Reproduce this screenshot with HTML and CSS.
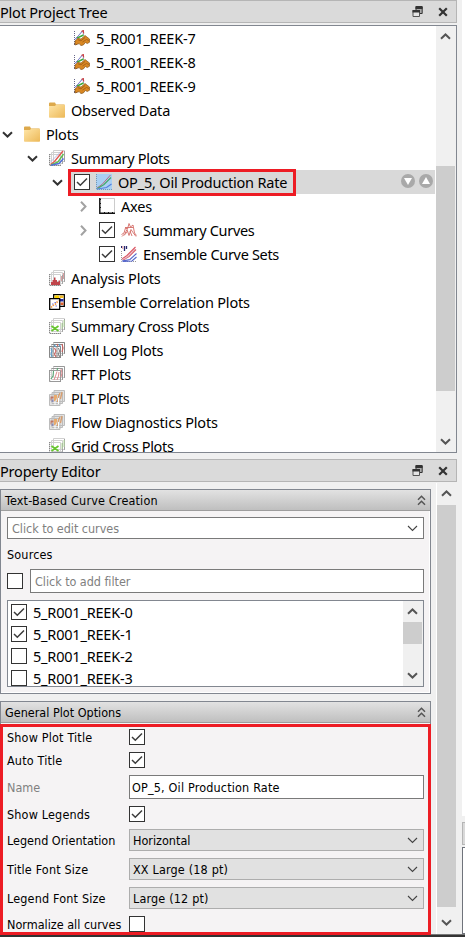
FILE: index.html
```html
<!DOCTYPE html>
<html lang="en">
<head>
<meta charset="utf-8">
<title>Plot Project Tree</title>
<link rel="stylesheet" href="styles.css">
</head>
<body>
<svg class="defs" width="0" height="0">
  <defs>
    <linearGradient id="gold" x1="0" y1="0" x2="1" y2="1"><stop offset="0" stop-color="#ffe6a8"/><stop offset="1" stop-color="#ecb857"/></linearGradient>
  </defs>
  <symbol id="down" viewBox="0 0 11 7"><path d="M1 1.2 5.5 5.5 10 1.2" fill="none" stroke="currentColor" stroke-width="2"/></symbol>
  <symbol id="up" viewBox="0 0 11 7"><path d="M1 5.8 5.5 1.5 10 5.8" fill="none" stroke="currentColor" stroke-width="2"/></symbol>
  <symbol id="right" viewBox="0 0 7 11"><path d="M1 .8 5.5 5.5 1 10.2" fill="none" stroke="#a2a2a2" stroke-width="2"/></symbol>
  <symbol id="thin" viewBox="0 0 11 7"><path d="M1 1 5.5 5.5 10 1" fill="none" stroke="#444" stroke-width="1.1"/></symbol>
  <symbol id="collapse" viewBox="0 0 9 11"><path d="M1 4.8 4.5 1.3 8 4.8M1 9.8 4.5 6.3 8 9.8" fill="none" stroke="#555" stroke-width="1.5"/></symbol>
  <symbol id="tick" viewBox="0 0 16 16"><path d="M3 8 6.3 11.2 13 4.5" fill="none" stroke="#3c3c3c" stroke-width="1.5"/></symbol>
  <symbol id="float" viewBox="0 0 11 12"><path d="M4 4V1h6.2v6.5H8" fill="#aaa" stroke="#333" stroke-width="1"/><path d="M3.500 0h7v3h-7z" fill="#333"/><path d="M1 4.500h6.500v6H1z" fill="#e4e4e4" stroke="#555"/><path d="M.5 4h7.500v2.500H.5z" fill="#333"/></symbol>
  <symbol id="close" viewBox="0 0 10 10"><path d="M1.200 1.200 8.800 8.800M8.800 1.200 1.200 8.800" stroke="#333" stroke-width="2.200"/></symbol>
  <symbol id="folder" viewBox="0 0 16 16"><path d="M0 1.500q0-1 1-1h5l1 2h8.500v3H0z" fill="#dda94c"/><path d="M0 4h6l1-1.200h8.200q.8 0 .8.800V15q0 .8-.8.800H.8Q0 15.800 0 15z" fill="url(#gold)"/></symbol>
  <symbol id="case" viewBox="0 0 16 16"><path d="M.5 1v14M0 14.500h3" stroke="#668" stroke-dasharray="1 1"/><path d="M1 9.500 8.500 1" stroke="#55b" fill="none"/><path d="M2 8.500 9 .8 9.500 5 3 8z" fill="#fff" stroke="#8484d0" stroke-width=".7"/><path d="M7.500 1.500 9.300.5 9.600 3.500" fill="none" stroke="#c44" stroke-width="1.200"/><path d="M3 8.200 9.500 5" stroke="#3cab35" stroke-width="1.400"/><path d="M1 11 4 8.300l3 .8 4-3.600 4.500 3.500.3 3-2.500 1.500-2-1-2 2.500-2.500.6-1.500-2L1 15z" fill="#d98722" stroke="#8a571b" stroke-width=".7"/><path d="m4 9.800 3 1 4-3.300M8.500 12l4-2.500 2.500 1" fill="none" stroke="#a8651a" stroke-width="1"/></symbol>
  <symbol id="sheets" viewBox="0 0 16 16"><path d="M4.500.5h11v11h-11zM2.500 2.500h11v11h-11zM.5 4.500h11v11H.5z" fill="#fff" stroke="#d0d0d0"/><path d="M.7 4v11.500H12M13.500 13.500V5M15.500 11.500V1" fill="none" stroke="#777" stroke-dasharray="1 1"/></symbol>
  <symbol id="summary" viewBox="0 0 16 16"><use href="#sheets"/><path d="m1.500 14.500 4-3L14 1" fill="none" stroke="#e25a52" stroke-width="1.400"/><path d="m2 15 7-3 5.500-8" fill="none" stroke="#5fbd50" stroke-width="1.400"/><path d="m2 15.200 8-1.700 4.500-5" fill="none" stroke="#5370da" stroke-width="1.400"/><path d="m1.500 12 4-4 6-6" fill="none" stroke="#a7aee0" stroke-width=".8"/></symbol>
  <symbol id="plot" viewBox="0 0 16 16"><path d="M0 0h16v16H0z" fill="#a9d0f3"/><path d="M.5 0v15.500H16" fill="none" stroke="#7797b4" stroke-dasharray="1 1"/><path d="M1 14 6 10.500 14.500 1" fill="none" stroke="#b96d82" stroke-width="1"/><path d="M1.500 14.500 8 10.500l7-7" fill="none" stroke="#45a96a" stroke-width="1.200"/><path d="m1.500 15 9-1.500L15.500 10" fill="none" stroke="#557fe0" stroke-width="1.200"/></symbol>
  <symbol id="axes" viewBox="0 0 16 16"><path d="M.5.500h15v15H.5z" fill="#fff" stroke="#b6b6b6" stroke-width=".7"/><path d="M.8 0v15.200H16" fill="none" stroke="#111" stroke-width="1.400"/><path d="M1 1.500h2M1 5.500h2M1 9.500h2M5.500 15v-2M9.500 15v-2M13.500 15v-2" stroke="#111" stroke-dasharray="1 1"/></symbol>
  <symbol id="curves" viewBox="0 0 16 16"><path d="M.5 12.500 3 11l1.500-5 2 1L8 1.500 9.500 5l2.500-2 1.500 8 2 2.500M1 14.500 4 11.500 6 7.500l2 6 2-6 2 3 3 4M3 13.500l3.500-4M9 9l2 5M4 5.500h8" fill="none" stroke="#d46a64" stroke-width=".9"/></symbol>
  <symbol id="ensemble" viewBox="0 0 16 16"><path d="M.5 2V0M3.500 0v5M5.500 0v3" stroke="#28286e" stroke-width="1.300"/><path d="M1.800 0v3" stroke="#d99"/><path d="M.5 5v10.500H16" fill="none" stroke="#999" stroke-dasharray="1 1"/><path d="M1 13 6 9.500 14.500 1M2 14l6-3.500 7-7" fill="none" stroke="#dc5965" stroke-width="1.200"/><path d="m1 13.500 5-2 8-8.500" fill="none" stroke="#e1b4c5"/><path d="m1 15 8-1.500 6.500-6M2 15.500l9-.5 4.500-4" fill="none" stroke="#5667cb" stroke-width="1.100"/></symbol>
  <symbol id="analysis" viewBox="0 0 16 16"><use href="#sheets"/><path d="M2 15v-3h1.500v-2H5V7.500h1.500V10H8v2h1.500v-1.500H11V15z" fill="#c0444a"/><path d="M12.500 6v5M14.500 3v6" stroke="#dba0a1"/></symbol>
  <symbol id="correlation" viewBox="0 0 16 16"><path d="M4.700.7h10.600v11.600H4.700z" fill="#fff" stroke="#000" stroke-width="1.300"/><path d="M5.500 1.500H10V4H5.500z" fill="#ffd400"/><path d="M10.500 1.500h4V4h-4z" fill="#f5bd28"/><path d="M11 5h3.500v2.500H11z" fill="#262aa0"/><path d="M11.500 8.500h3V11h-3z" fill="#e1602d"/><path d="M.7 4.700h10v10.600H.7z" fill="#fff" stroke="#000" stroke-width="1.300"/><path d="m2 13.500 2-2 2-1 3.500-4" fill="none" stroke="#f29a47" stroke-width="1.700" stroke-dasharray="1.500 1"/><path d="M3 10h1.500M5.500 8.500H7M6.500 12H8" stroke="#7779df" stroke-width="1.100"/></symbol>
  <symbol id="cross" viewBox="0 0 16 16"><use href="#sheets"/><path d="m2.500 8 7 5M2.500 13l7-5M4 10.500h4" fill="none" stroke="#65c62c" stroke-width="1.700"/><path d="M13 5v6M15 2v7" stroke="#b4dc9d"/></symbol>
  <symbol id="well" viewBox="0 0 16 16"><use href="#sheets"/><path d="M.5 4.500h11v11H.5zM4 5v10M8 5v10M2.500 2.500h11v11M4.500.5h11v11" fill="none" stroke="#888"/><path d="m2 6 1 3-1 3 1 3M5 3l2 2M10 2l1.500 3" fill="none" stroke="#5b9bc5" stroke-width="1.200"/><path d="m5.500 6 1.500 3-1.500 3 1.500 3M8 2l1 2M13 2l1 4-1 4" fill="none" stroke="#c85e5b" stroke-width="1.100"/><path d="m9.500 6 1 3-1 3 1 3" fill="none" stroke="#777"/></symbol>
  <symbol id="rft" viewBox="0 0 16 16"><use href="#sheets"/><path d="M.5 4.500h11v11H.5zM2.500 2.500h11v11M4.500.5h11v11" fill="none" stroke="#999"/><path d="m2 13 2-3 .5-5M9 2 8 4" fill="none" stroke="#5aa674" stroke-width="1.100"/><path d="m5 14 1.500-4L8 5.500M8 14l1.500-4 .5-4M12 3l1 4-1 4" fill="none" stroke="#df8c90"/></symbol>
  <symbol id="plt" viewBox="0 0 16 16"><path d="M5 .5h10.500v11H5zM3 2.500h10.500v11H3zM.5 4.500H11v11H.5z" fill="#e2e2e2" stroke="#bcbcbc"/><path d="M5 5h3v2.500l-1 2.500-2 2z" fill="#e9ab6c"/><path d="M1.500 6.500h3v2h-2v2h-1z" fill="#bd7463"/><path d="M2.500 9.500h2v2.500h-2z" fill="#8a8ab4"/><path d="m8.500 12 1-6 1.500-3M11.500 9 13 2" fill="none" stroke="#d89d6c" stroke-width="1.300"/><path d="M6 15v-4M9.500 14V8" stroke="#fff"/></symbol>
</svg>

<div class="app">
  <main class="dock">
    <header class="dock-title"><span class="ui">Plot Project Tree</span><svg class="i-float"><use href="#float"/></svg><svg class="i-close"><use href="#close"/></svg></header>
    <section class="tree-frame">
      <div class="tree ui">
        <div class="row l2"><i class="slot"></i><svg><use href="#case"/></svg><span>5_R001_REEK-7</span></div>
        <div class="row l2"><i class="slot"></i><svg><use href="#case"/></svg><span>5_R001_REEK-8</span></div>
        <div class="row l2"><i class="slot"></i><svg><use href="#case"/></svg><span>5_R001_REEK-9</span></div>
        <div class="row l1"><i class="slot"></i><svg><use href="#folder"/></svg><span>Observed Data</span></div>
        <div class="row l0"><i class="slot"><svg class="chev"><use href="#down"/></svg></i><svg><use href="#folder"/></svg><span>Plots</span></div>
        <div class="row l1"><i class="slot"><svg class="chev"><use href="#down"/></svg></i><svg><use href="#summary"/></svg><span class="snug">Summary Plots</span></div>
        <div class="row l2 selected"><i class="slot"><svg class="chev"><use href="#down"/></svg></i><b class="check"><svg><use href="#tick"/></svg></b><svg><use href="#plot"/></svg><span>OP_5, Oil Production Rate</span>
          <svg class="round" viewBox="0 0 14 14"><circle cx="7" cy="7" r="7" fill="#a9a9a9"/><path d="M3 4h8l-4 7z" fill="#fff"/></svg><svg class="round" viewBox="0 0 14 14"><circle cx="7" cy="7" r="7" fill="#a9a9a9"/><path d="M3 10h8L7 3z" fill="#fff"/></svg>
        </div>
        <div class="row l3"><i class="slot"><svg class="chev-r"><use href="#right"/></svg></i><svg><use href="#axes"/></svg><span>Axes</span></div>
        <div class="row l3"><i class="slot"><svg class="chev-r"><use href="#right"/></svg></i><b class="check"><svg><use href="#tick"/></svg></b><svg><use href="#curves"/></svg><span class="snug">Summary Curves</span></div>
        <div class="row l3"><i class="slot"></i><b class="check"><svg><use href="#tick"/></svg></b><svg><use href="#ensemble"/></svg><span class="snug">Ensemble Curve Sets</span></div>
        <div class="row l1"><i class="slot"></i><svg><use href="#analysis"/></svg><span>Analysis Plots</span></div>
        <div class="row l1"><i class="slot"></i><svg><use href="#correlation"/></svg><span>Ensemble Correlation Plots</span></div>
        <div class="row l1"><i class="slot"></i><svg><use href="#cross"/></svg><span class="snug">Summary Cross Plots</span></div>
        <div class="row l1"><i class="slot"></i><svg><use href="#well"/></svg><span>Well Log Plots</span></div>
        <div class="row l1"><i class="slot"></i><svg><use href="#rft"/></svg><span>RFT Plots</span></div>
        <div class="row l1"><i class="slot"></i><svg><use href="#plt"/></svg><span class="snug">PLT Plots</span></div>
        <div class="row l1"><i class="slot"></i><svg><use href="#plt"/></svg><span>Flow Diagnostics Plots</span></div>
        <div class="row l1"><i class="slot"></i><svg><use href="#cross"/></svg><span class="snug">Grid Cross Plots</span></div>
      </div>
      <div class="scroll tree-scroll"><svg class="chev"><use href="#up"/></svg><div class="thumb"></div><svg class="chev"><use href="#down"/></svg></div>
      <div class="mark mark-row"></div>
    </section>

    <header class="dock-title second"><span class="ui">Property Editor</span><svg class="i-float"><use href="#float"/></svg><svg class="i-close"><use href="#close"/></svg></header>
    <section class="editor">
      <div class="groups">
        <div class="group curve-group">
          <h2 class="wide">Text-Based Curve Creation<svg class="fold"><use href="#collapse"/></svg></h2>
          <div class="group-body">
            <div class="field combo hint">Click to edit curves<svg class="arrow"><use href="#thin"/></svg></div>
            <div class="sources wide">Sources</div>
            <div class="filter"><b class="check"></b><div class="field hint">Click to add filter</div></div>
            <div class="list">
              <div class="items ui">
                <div class="item"><b class="check"><svg><use href="#tick"/></svg></b><span>5_R001_REEK-0</span></div>
                <div class="item"><b class="check"><svg><use href="#tick"/></svg></b><span>5_R001_REEK-1</span></div>
                <div class="item"><b class="check"></b><span>5_R001_REEK-2</span></div>
                <div class="item"><b class="check"></b><span>5_R001_REEK-3</span></div>
              </div>
              <div class="scroll list-scroll"><svg class="chev"><use href="#up"/></svg><div class="thumb"></div><svg class="chev"><use href="#down"/></svg></div>
            </div>
          </div>
        </div>
        <div class="group plot-group">
          <h2>General Plot Options<svg class="fold"><use href="#collapse"/></svg></h2>
          <div class="form">
            <label class="wide">Show Plot Title</label><b class="check"><svg><use href="#tick"/></svg></b>
            <label class="wide">Auto Title</label><b class="check"><svg><use href="#tick"/></svg></b>
            <label class="off">Name</label><div class="field name wide">OP_5, Oil Production Rate</div>
            <label class="wide">Show Legends</label><b class="check"><svg><use href="#tick"/></svg></b>
            <label>Legend Orientation</label><div class="select">Horizontal<svg class="arrow"><use href="#thin"/></svg></div>
            <label class="wide">Title Font Size</label><div class="select wide">XX Large (18 pt)<svg class="arrow"><use href="#thin"/></svg></div>
            <label class="wide">Legend Font Size</label><div class="select wide">Large (12 pt)<svg class="arrow"><use href="#thin"/></svg></div>
            <label>Normalize all curves</label><b class="check"></b>
          </div>
          <div class="mark mark-form"></div>
        </div>
      </div>
      <div class="scroll editor-scroll"><svg class="chev"><use href="#up"/></svg><div class="thumb"></div><svg class="chev"><use href="#down"/></svg></div>
    </section>
  </main>
  <aside class="neighbor"><div class="view"></div><div class="bar"></div><div class="pane"></div></aside>
</div>
<footer class="edge"></footer>
</body>
</html>
```

FILE: styles.css
```css
* { box-sizing: border-box; }
body { margin: 0; width: 465px; height: 937px; overflow: hidden; background: #f0f0f0; color: #000; font: 12.5px/16px "DejaVu Sans Condensed", "DejaVu Sans", sans-serif; font-stretch: condensed; }
svg { display: block; flex: none; }
.defs { position: absolute; }
.ui { font-family: "Noto Sans", "Open Sans", sans-serif; font-size: 14.5px; font-stretch: normal; letter-spacing: -0.2px; }
.wide { letter-spacing: 0.17px; }
.snug { letter-spacing: -0.32px; }
.app { display: flex; height: 934px; }
.dock { width: 457px; display: flex; flex-direction: column; }
.neighbor { margin-left: 5px; width: 3px; display: flex; flex-direction: column; }
.view { height: 816px; background: #fff; }
.bar { margin-top: 6px; height: 23px; background: #d9d9d9; border: solid #b5b5b5; border-width: 1px 0 1px 1px; }
.pane { margin-top: 2px; flex: 1; background: #fff; border: solid #6f737b; border-width: 1px 0 1px 1px; }
.edge { height: 3px; background: #333; border-top: 1px solid #777; }

.dock-title { height: 23px; flex: none; display: flex; align-items: center; background: #dadada; border: 1px solid #b5b5b5; border-left: 0; padding-right: 8px; }
.dock-title span { flex: 1; }
.second { margin-top: 6px; }
.i-float { width: 11px; height: 12px; }
.i-close { width: 10px; height: 10px; margin-left: 15px; }

.tree-frame { position: relative; flex: none; margin-top: 2px; height: 428px; border: solid #828790; border-width: 1px 1px 1px 0; background: #fff; display: flex; }
.tree { flex: 1; overflow: hidden; }
.row { height: 24px; display: flex; align-items: center; gap: 6px; margin-right: 1px; white-space: nowrap; }
.row > svg { width: 16px; height: 16px; }
.row > span { line-height: 24px; }
.l1 { padding-left: 25px; }
.l2 { padding-left: 50px; }
.l3 { padding-left: 75px; }
.slot { width: 18px; padding-left: 2px; }
.l3 .slot { padding-left: 5px; }
.chev { width: 11px; height: 7px; color: #333; }
.chev-r { width: 7px; height: 11px; }
.selected { background: linear-gradient(90deg, transparent 71px, #d9d9d9 71px); }
.selected span { flex: 1; }
.row > .round { width: 14px; height: 14px; margin-top: -2px; margin-right: 2px; }
.row > .round + .round { margin-left: -4px; }
.check { flex: none; width: 16px; height: 16px; background: #fff; border: 1px solid #333; }
.check svg { width: 16px; height: 16px; margin: -1px; }
.mark { position: absolute; border: 3px solid #ed1c24; }
.mark-row { left: 68px; top: 143px; width: 228px; height: 27px; }

.scroll { flex: none; background: #f0f0f0; display: flex; flex-direction: column; }
.scroll .chev { color: #555; margin-left: 4px; }
.thumb { background: #cdcdcd; width: 19px; }
.tree-scroll { width: 20px; padding: 7px 0; }
.tree-scroll .thumb { margin: 126px 0 47px; height: 225px; }

.editor { flex: 1; display: flex; padding-top: 1px; }
.groups { width: 431px; padding-top: 6px; }
.group { border: 1px solid #828790; background: #f5f3f4; }
.group h2 { margin: 0; height: 21px; padding: 1px 4px 0; display: flex; justify-content: space-between; align-items: center; font: inherit; background: linear-gradient(#e2e2e2, #bfbfbf); border-bottom: 1px solid #9d9d9d; }
.fold { width: 9px; height: 11px; margin-top: -1px; }
.curve-group { height: 205px; box-shadow: inset -1px -1px #fff; }
.group-body { padding: 6px 6px 0; }
.field { height: 24px; background: #fff; border: 1px solid #7a7a7a; padding: 1px 4px 0; display: flex; align-items: center; }
.hint { color: #808080; letter-spacing: -0.04px; }
.combo { height: 22px; justify-content: space-between; padding-right: 5px; }
.arrow { width: 11px; height: 7px; }
.sources { height: 30px; line-height: 31px; }
.filter { display: flex; align-items: center; gap: 7px; }
.filter .field { flex: 1; }
.list { margin-top: 7px; height: 87px; background: #fff; border: 1px solid #828790; display: flex; }
.items { flex: 1; overflow: hidden; }
.item { height: 22px; padding: 0 0 0 3px; display: flex; align-items: center; gap: 6px; }
.list-scroll { width: 20px; padding-top: 7px; }
.list-scroll .thumb { margin: 7px 0 28px; height: 22px; }

.plot-group { position: relative; margin-top: 7px; height: 233px; border-bottom: 0; }
.form { padding: 6px 6px 0; display: grid; grid-template-columns: 122px 295px; row-gap: 7px; align-items: center; white-space: nowrap; }
.form label { height: 16px; line-height: 18px; }
.off { color: #808080; }
.name { padding-left: 2px; }
.select { height: 22px; display: flex; align-items: center; justify-content: space-between; background: #e1e1e1; border: 1px solid #adadad; padding: 1px 5px 0 3px; }
.mark-form { left: -1px; top: 22px; width: 431px; height: 211px; }
.editor-scroll { width: 21px; margin-left: 5px; border-left: 1px solid #fff; padding-top: 7px; }
.editor-scroll .thumb { margin: 8px 0 12px; height: 402px; }
```
